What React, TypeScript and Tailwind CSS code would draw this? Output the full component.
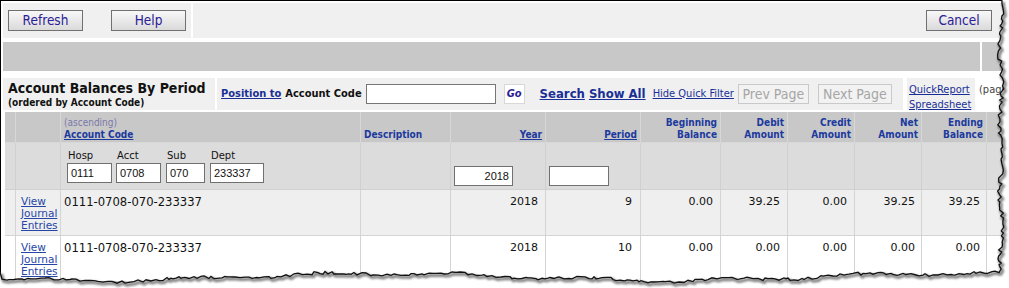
import React from "react";

const C = "font-['DejaVu_Sans_Condensed','DejaVu_Sans',sans-serif] font-stretch-condensed";
const V = "font-['DejaVu_Sans',sans-serif]";
const A = "font-['Liberation_Sans',Arial,sans-serif]";

function Btn({ label, w }: { label: string; w: string }) {
  return (
    <div
      className={`${C} ${w} h-[21px] border border-[#707070] bg-linear-to-b from-[#f8f8f8] to-[#dadada] flex items-center justify-center text-[13.5px] leading-none text-[#2b2096]`}
    >
      {label}
    </div>
  );
}

function DisBtn({ label, w, cls }: { label: string; w: string; cls: string }) {
  return (
    <div
      className={`${C} ${w} ${cls} h-[20px] border border-[#c9c9c9] bg-[#f2f2f2] flex items-center justify-center text-[14px] leading-none text-[#a6a6a6]`}
    >
      {label}
    </div>
  );
}

function TornEdge() {
  let s = 987654;
  const r = () => {
    s = (s * 16807) % 2147483647;
    return s / 2147483647;
  };
  const pts: [number, number][] = [];
  for (let y = 0; y <= 274; y += 2 + Math.floor(r() * 3)) {
    const x = 1001 + Math.sin(y * 0.09) * 1.5 + (r() - 0.5) * 4;
    pts.push([x, y]);
  }
  for (let x = 999; x >= 0; x -= 2 + Math.floor(r() * 4)) {
    const y =
      277 +
      Math.sin(x * 0.011 + 0.5) * 3.5 +
      Math.sin(x * 0.047 + 2) * 1.5 +
      (r() - 0.5) * 3;
    pts.push([x, y]);
  }
  pts.push([0, 272]);
  const line = pts.map((p) => `${p[0].toFixed(1)},${p[1].toFixed(1)}`).join(" ");
  const fill = `M1009,0 L${line} L0,288 L1009,288 Z`;
  const shadow = pts.map((p) => `${(p[0] + 1.5).toFixed(1)},${(p[1] + 2).toFixed(1)}`).join(" ");
  return (
    <svg className="absolute left-0 top-0 pointer-events-none" width="1009" height="288" viewBox="0 0 1009 288">
      <defs>
        <filter id="blur" x="-5%" y="-5%" width="110%" height="110%">
          <feGaussianBlur stdDeviation="1.2" />
        </filter>
      </defs>
      <path d={fill} fill="#ffffff" />
      <polyline points={shadow} fill="none" stroke="rgba(0,0,0,0.5)" strokeWidth="3" filter="url(#blur)" />
      <polyline points={line} fill="none" stroke="#111" strokeWidth="1.3" />
    </svg>
  );
}

const hdr = `${C} font-bold text-[10px] leading-[12px] text-[#1c3a9e]`;
const hcell = "border-r border-b border-[#d8d8d8] bg-[#c8c8c8] h-[31px] flex flex-col justify-end pb-[1px]";
const fcell = "border-r border-b border-[#d0d0d0] bg-[#dcdcdc] h-[47px]";
const num = `${V} text-[11px] leading-[13px] text-[#111] text-right`;

function DataRow({ bg, period, vals }: { bg: string; period: string; vals: string[] }) {
  const cell = `border-r border-b border-[#d4d4d4] h-[46px] pt-[5px] ${bg}`;
  return (
    <>
      <div className={cell} />
      <div className={`${cell} pl-[5px] pt-[4px]`}>
        <span className={`${V} block text-[10.5px] leading-[12px] text-[#2645a6] underline`}>
          View
          <br />
          Journal
          <br />
          Entries
        </span>
      </div>
      <div className={`${cell} pl-[3px] pt-[4px]`}>
        <span className={`${V} block text-[11.6px] leading-[14px] text-[#111]`}>0111-0708-070-233337</span>
      </div>
      <div className={cell} />
      <div className={`${cell} pr-[7px] ${num}`}>2018</div>
      <div className={`${cell} pr-[8px] ${num}`}>{period}</div>
      <div className={`${cell} pr-[7px] ${num}`}>{vals[0]}</div>
      <div className={`${cell} pr-[7px] ${num}`}>{vals[1]}</div>
      <div className={`${cell} pr-[7px] ${num}`}>{vals[2]}</div>
      <div className={`${cell} pr-[6px] ${num}`}>{vals[3]}</div>
      <div className={`${cell} pr-[6px] ${num}`}>{vals[4]}</div>
      <div className={cell} />
    </>
  );
}

function FilterInput({ label, w, value }: { label: string; w: string; value: string }) {
  return (
    <div className="flex flex-col">
      <span className={`${V} text-[10px] leading-[12px] text-[#111] pl-[1px] mb-[1px]`}>{label}</span>
      <div className={`${w} h-[20px] border border-[#707070] bg-white flex items-center pl-[3px] ${A} text-[11px] text-[#111]`}>
        {value}
      </div>
    </div>
  );
}

export default function App() {
  return (
    <div className="relative w-[1009px] h-[288px] overflow-hidden bg-white">
      <div className="w-[1009px] h-[288px] border-l border-t border-black pl-[2px] pt-[2px] flex flex-col">
        {/* Row 1: toolbar */}
        <div className="flex h-[35px] shrink-0">
          <div className="w-[188px] bg-[#f0f0f0] flex items-start pt-[7px] pl-[5px] gap-[28px]">
            <Btn label="Refresh" w="w-[75px]" />
            <Btn label="Help" w="w-[75px]" />
          </div>
          <div className="w-[2px]" />
          <div className="flex-1 bg-[#f0f0f0] flex justify-end items-start pt-[7px] pr-[17px]">
            <Btn label="Cancel" w="w-[66px]" />
          </div>
        </div>

        {/* Row 2: gray band */}
        <div className="flex h-[29px] mt-[4px] shrink-0">
          <div className="w-[977px] bg-[#c7c8c7]" />
          <div className="w-[2px]" />
          <div className="flex-1 bg-[#c7c8c7]" />
        </div>

        {/* Row 3: title + quick filter bar */}
        <div className="flex h-[32px] mt-[7px] shrink-0">
          <div className="w-[212px] bg-[#f0f0f0] pl-[5px] pt-[2px]">
            <div className={`${C} font-bold text-[14px] leading-[16px] text-[#111]`}>Account Balances By Period</div>
            <div className={`${C} font-bold text-[10px] leading-[12px] text-[#111] mt-[1px]`}>(ordered by Account Code)</div>
          </div>
          <div className="w-[2px]" />
          <div className="w-[686px] bg-[#f0f0f0] flex items-center pl-[4px]">
            <span className={`${C} font-bold text-[11px] text-[#1a2f96] underline`}>Position to</span>
            <span className={`${C} font-bold text-[11px] text-[#111] ml-[4px]`}>Account Code</span>
            <div className="ml-[4px] w-[130px] h-[20px] border border-[#767676] bg-white" />
            <div className="ml-[8px] w-[21px] h-[20px] border border-[#d8d8d8] bg-white flex items-center justify-center">
              <span className={`${C} font-bold italic text-[11px] text-[#2b2096]`}>Go</span>
            </div>
            <span className={`${C} font-bold text-[13px] text-[#1a2f96] underline ml-[15px]`}>Search</span>
            <span className={`${C} font-bold text-[13px] text-[#1a2f96] underline ml-[4px]`}>Show All</span>
            <span className={`${C} text-[11px] text-[#1a2f96] underline ml-[7px]`}>Hide Quick Filter</span>
            <DisBtn label="Prev Page" w="w-[71px]" cls="ml-[4px]" />
            <DisBtn label="Next Page" w="w-[74px]" cls="ml-[9px]" />
          </div>
          <div className="w-[4px]" />
          <div className="w-[68px] bg-[#f0f0f0] pl-[2px] pt-[4px]">
            <div className={`${C} text-[11px] leading-[15px] text-[#1a2f96] underline`}>QuickReport</div>
            <div className={`${C} text-[11px] leading-[15px] text-[#1a2f96] underline`}>Spreadsheet</div>
          </div>
          <div className={`${C} text-[11px] leading-[15px] text-[#444] pl-[4px] pt-[4px]`}>(page</div>
        </div>

        {/* Table */}
        <div className="mt-[2px] ml-[2px] grid grid-cols-[11px_45px_300px_90px_95px_95px_80px_67px_67px_67px_65px_40px]">
          {/* header */}
          <div className={hcell} />
          <div className={hcell} />
          <div className={`${hcell} pl-[3px]`}>
            <span className={`${C} text-[10px] leading-[12px] text-[#7a78a8]`}>(ascending)</span>
            <span className={`${hdr} underline text-[#0c2c9c]`}>Account Code</span>
          </div>
          <div className={`${hcell} pl-[3px]`}>
            <span className={hdr}>Description</span>
          </div>
          <div className={`${hcell} pr-[3px] items-end`}>
            <span className={`${hdr} underline text-[#0c2c9c]`}>Year</span>
          </div>
          <div className={`${hcell} pr-[3px] items-end`}>
            <span className={`${hdr} underline text-[#0c2c9c]`}>Period</span>
          </div>
          <div className={`${hcell} pr-[3px] items-end text-right`}>
            <span className={hdr}>Beginning</span>
            <span className={hdr}>Balance</span>
          </div>
          <div className={`${hcell} pr-[3px] items-end text-right`}>
            <span className={hdr}>Debit</span>
            <span className={hdr}>Amount</span>
          </div>
          <div className={`${hcell} pr-[3px] items-end text-right`}>
            <span className={hdr}>Credit</span>
            <span className={hdr}>Amount</span>
          </div>
          <div className={`${hcell} pr-[3px] items-end text-right`}>
            <span className={hdr}>Net</span>
            <span className={hdr}>Amount</span>
          </div>
          <div className={`${hcell} pr-[3px] items-end text-right`}>
            <span className={hdr}>Ending</span>
            <span className={hdr}>Balance</span>
          </div>
          <div className={hcell} />

          {/* filter row */}
          <div className={fcell} />
          <div className={fcell} />
          <div className={`${fcell} flex items-end pl-[6px] pb-[6px] gap-[4px]`}>
            <FilterInput label="Hosp" w="w-[45px]" value="0111" />
            <FilterInput label="Acct" w="w-[45px]" value="0708" />
            <div className="ml-[1px]">
              <FilterInput label="Sub" w="w-[39px]" value="070" />
            </div>
            <div className="ml-[1px]">
              <FilterInput label="Dept" w="w-[54px]" value="233337" />
            </div>
          </div>
          <div className={fcell} />
          <div className={`${fcell} flex items-end pl-[3px] pb-[3px]`}>
            <div className={`w-[59px] h-[20px] border border-[#707070] bg-white flex items-center justify-end pr-[3px] ${A} text-[11px] text-[#111]`}>
              2018
            </div>
          </div>
          <div className={`${fcell} flex items-end pl-[3px] pb-[3px]`}>
            <div className="w-[60px] h-[20px] border border-[#707070] bg-white" />
          </div>
          <div className={fcell} />
          <div className={fcell} />
          <div className={fcell} />
          <div className={fcell} />
          <div className={fcell} />
          <div className={fcell} />

          <DataRow bg="bg-[#efefef]" period="9" vals={["0.00", "39.25", "0.00", "39.25", "39.25"]} />
          <DataRow bg="bg-white" period="10" vals={["0.00", "0.00", "0.00", "0.00", "0.00"]} />
        </div>
      </div>
      <TornEdge />
    </div>
  );
}
